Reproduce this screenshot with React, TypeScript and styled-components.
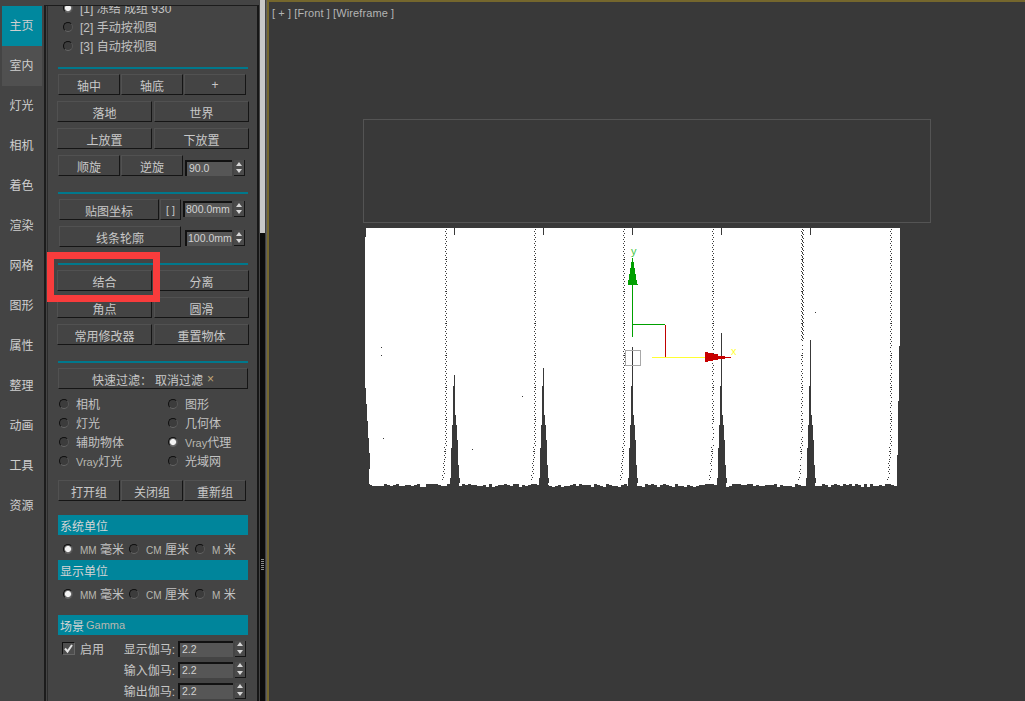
import type { ReactNode } from "react";
import styled, { createGlobalStyle } from "styled-components";

const GlobalStyle = createGlobalStyle`
  html, body {
    margin: 0;
    padding: 0;
    background: #444444;
  }
  * {
    box-sizing: border-box;
  }
`;

const Page = styled.div`
  width: 1025px;
  height: 701px;
  display: flex;
  overflow: hidden;
  background: #444444;
  color: #c6c6c6;
  font-family: "Liberation Sans", "Noto Sans CJK SC", sans-serif;
  font-size: 12px;
`;

const TabColumn = styled.nav`
  width: 44px;
  flex: none;
  padding: 6px 2px 0;
  display: flex;
  flex-direction: column;
`;

const Tab = styled.div<{ $state?: "active" | "hover" }>`
  width: 40px;
  height: 40px;
  flex: none;
  display: flex;
  align-items: center;
  justify-content: center;
  padding: 0 1px 3px 0;
  font-size: 12px;
  color: #cfcfcf;
  background: ${(p) =>
    p.$state === "active" ? "#00889e" : p.$state === "hover" ? "#505050" : "transparent"};
`;

const Panel = styled.section`
  position: relative;
  margin-top: 5px;
  width: 215px;
  height: 696px;
  flex: none;
  border-left: 2px solid #1c1c1c;
  border-top: 1px solid #1c1c1c;
  border-right: 2px solid #161616;
  overflow: hidden;
`;

const PanelBody = styled.div`
  height: 100%;
  margin-left: 1px;
  border-left: 1px solid #2c2c2c;
  padding-left: 9px;
  overflow: hidden;
`;

const Stack = styled.div`
  margin-top: -8px;
  width: 192px;
  display: flex;
  flex-direction: column;
`;

const Divider = styled.div<{ $top: number }>`
  height: 2px;
  flex: none;
  margin: ${(p) => p.$top}px 0 0 1px;
  width: 190px;
  background: #00788c;
`;

const ButtonRow = styled.div<{ $top: number; $left?: number; $cols: string; $gap?: number }>`
  display: grid;
  height: 21px;
  flex: none;
  margin: ${(p) => p.$top}px 0 0 ${(p) => p.$left ?? 0}px;
  grid-template-columns: ${(p) => p.$cols};
  column-gap: ${(p) => p.$gap ?? 1}px;
  align-items: start;
`;

const Btn = styled.div`
  height: 21px;
  display: flex;
  align-items: center;
  justify-content: center;
  padding-top: 1px;
  background: #444444;
  border: 1px solid;
  border-color: #515151 #151515 #151515 #515151;
  white-space: nowrap;
  color: #c8c8c8;
`;

const BracketMark = styled.span`
  font-size: 10.5px;
`;

const CancelLabel = styled.span`
  margin-left: 3px;
`;

const CancelMark = styled.span`
  margin-left: 4px;
  color: #c0a878;
`;

const Spinner = styled.div<{ $field: number; $top?: number; $ml?: number }>`
  display: flex;
  align-items: flex-start;
  gap: 2px;
  height: 16px;
  margin: ${(p) => p.$top ?? 0}px 0 0 ${(p) => p.$ml ?? 0}px;
  width: ${(p) => p.$field + 13}px;
`;

const SpinField = styled.div<{ $field: number; $pad?: number }>`
  width: ${(p) => p.$field}px;
  height: 16px;
  flex: none;
  background: #565656;
  border-top: 2px solid #111111;
  border-left: 2px solid #111111;
  padding-left: ${(p) => p.$pad ?? 2}px;
  font-size: 10.5px;
  line-height: 13px;
  color: #d2d2d2;
  white-space: nowrap;
  overflow: hidden;
`;

const SpinArrows = styled.div`
  width: 11px;
  height: 16px;
  flex: none;
  display: flex;
  flex-direction: column;
  border-right: 1px solid #151515;
  border-bottom: 1px solid #151515;
  background: #4a4a4a;
`;

const SpinArrow = styled.div<{ $down?: boolean }>`
  flex: 1;
  display: flex;
  align-items: center;
  justify-content: center;
  &::before {
    content: "";
    border-left: 3.5px solid transparent;
    border-right: 3.5px solid transparent;
    ${(p) => (p.$down ? "border-top: 4px solid #d6d6d6;" : "border-bottom: 4px solid #d6d6d6;")}
  }
`;

const RadioGrid = styled.div<{ $top: number; $left: number; $cols: string }>`
  display: grid;
  flex: none;
  margin: ${(p) => p.$top}px 0 0 ${(p) => p.$left}px;
  grid-template-columns: ${(p) => p.$cols};
  grid-auto-rows: 19px;
`;

const RadioItem = styled.label`
  display: flex;
  align-items: center;
  gap: 7px;
  white-space: nowrap;
  color: #c2c2c2;
`;

const RadioDot = styled.span<{ $on?: boolean }>`
  width: 10px;
  height: 10px;
  flex: none;
  border-radius: 50%;
  background: ${(p) =>
    p.$on
      ? "radial-gradient(circle, #f2f2f2 0 2.6px, #777777 3.4px, #333333 5px)"
      : "#3c3c3c"};
  border: 1.5px solid;
  border-color: #0e0e0e #555555 #666666 #0e0e0e;
`;

const Latin = styled.span<{ $size?: number }>`
  font-size: ${(p) => p.$size ?? 11}px;
  color: #b8b8b0;
`;

const SectionHeader = styled.div<{ $top: number }>`
  height: 20px;
  flex: none;
  width: 190px;
  margin: ${(p) => p.$top}px 0 0 1px;
  padding-left: 2px;
  display: flex;
  align-items: center;
  gap: 2px;
  background: #00859b;
  color: #d4d4d4;
`;

const GammaBlock = styled.div`
  display: grid;
  flex: none;
  grid-template-columns: 66px 118px;
  margin: 3px 0 0 5px;
`;

const EnableLabel = styled.label`
  display: flex;
  align-items: center;
  gap: 5px;
  height: 21px;
`;

const CheckBox = styled.span`
  width: 13px;
  height: 13px;
  flex: none;
  display: flex;
  align-items: center;
  justify-content: center;
  background: #4e4e4e;
  border: 1px solid;
  border-color: #111111 #666666 #666666 #111111;
`;

const GammaRows = styled.div`
  display: flex;
  flex-direction: column;
`;

const GammaRow = styled.div`
  height: 21px;
  display: flex;
  align-items: center;
  justify-content: flex-end;
  gap: 3px;
  white-space: nowrap;
`;

const RedFrame = styled.div`
  position: absolute;
  left: 1px;
  top: 246px;
  width: 113px;
  height: 50px;
  border: 7px solid #f83c3c;
  pointer-events: none;
`;

const ScrollTrack = styled.div`
  width: 5px;
  height: 701px;
  flex: none;
  margin-left: 1px;
  display: flex;
  flex-direction: column;
  background: #0c0c0c;
`;

const ScrollThumb = styled.div`
  height: 233px;
  flex: none;
  background: #c8c8c8;
`;

const ScrollGrip = styled.div`
  margin: 326px auto 0;
  width: 3px;
  height: 11px;
  background: repeating-linear-gradient(#8a8a8a 0 1px, transparent 1px 2px);
`;

const Gutter = styled.div`
  width: 2px;
  flex: none;
  background: linear-gradient(90deg, #404040 50%, #5e5e5e 50%);
`;

const Viewport = styled.main`
  position: relative;
  flex: 1;
  height: 701px;
  border-left: 2px solid #75672d;
  border-top: 2px solid #75672d;
  background: #393939;
`;

const ViewLabel = styled.div`
  position: absolute;
  left: 3px;
  top: 5px;
  font-size: 11px;
  letter-spacing: 0.1px;
  color: #b4b4b4;
  white-space: pre;
`;

const Scene = styled.svg`
  display: block;
`;

// little repeatable random so the curtain noise stays the same on each load
let seed = 17;
const rnd = () => {
  seed = (seed * 1103515245 + 12345) % 2147483648;
  return seed / 2147483648;
};

const folds = [454, 543, 632, 721, 810];
const foldStart = [375, 368, 347, 333, 340];
const dotted = [445, 534, 623, 712, 801, 890];

const curtainOutline = (() => {
  const pts: string[] = ["366,228", "900,228", "900,346", "899,346", "899,401", "898,401", "898,455", "897,455", "897,484"];
  for (let x = 897; x > 371; x -= 3) {
    const y = 484 + Math.floor(rnd() * 3.4);
    pts.push(`${x},${y}`, `${x - 3},${y}`);
  }
  pts.push("371,484", "369,484", "369,478", "370,460", "369,445", "368,430", "367,412", "366,395", "365,380", "365,237", "366,237");
  return pts.join(" ");
})();

const stairs: [number, number, number][] = [
  [386, -1, 1],
  [415, -1, 2],
  [425, -2, 3],
  [440, -2, 4],
  [448, -3, 4],
  [465, -3, 5],
  [478, -4, 6],
  [483, -4, 5],
];

const wedges = folds
  .map((cx, i) => {
    let d = `M${cx} 228h1v7h-1zM${cx} ${foldStart[i]}h1v${386 - foldStart[i]}h-1z`;
    stairs.forEach(([y, l, r], n) => {
      const next = n + 1 < stairs.length ? stairs[n + 1][0] : 488;
      d += `M${cx + l} ${y}H${cx + r}V${next}H${cx + l}z`;
    });
    return d;
  })
  .join("");

const dots = dotted
  .map((x0, i) => {
    let d = "";
    let row = 0;
    for (let y = 229; y < 480; y += 2) {
      row += 1;
      // the right three columns thin out below the middle of the curtain
      if (i >= 3 && y > 340 && rnd() < 0.2) continue;
      const drift = y < 440 ? 0 : Math.round(-((y - 440) / 40) * 3);
      const x = x0 + drift + (row % 2);
      // short dash every so often
      const w = row % 16 === 0 ? 2 : 1;
      d += `M${x} ${y}h${w}v1h-${w}z`;
      if (i === 4 && y < 340) d += `M${x + 1} ${y + 1}h1v1h-1z`;
    }
    return d;
  })
  .join("");

const specks: [number, number][] = [
  [381, 347],
  [381, 355],
  [383, 438],
  [472, 449],
  [522, 396],
  [815, 312],
];

const tabs = ["主页", "室内", "灯光", "相机", "着色", "渲染", "网格", "图形", "属性", "整理", "动画", "工具", "资源"];

function Spin({ value, field, top, ml, pad }: { value: string; field: number; top?: number; ml?: number; pad?: number }) {
  return (
    <Spinner $field={field} $top={top} $ml={ml}>
      <SpinField $field={field} $pad={pad}>{value}</SpinField>
      <SpinArrows>
        <SpinArrow />
        <SpinArrow $down />
      </SpinArrows>
    </Spinner>
  );
}

function Radio({ label, on }: { label: ReactNode; on?: boolean }) {
  return (
    <RadioItem>
      <RadioDot $on={on} />
      <span>{label}</span>
    </RadioItem>
  );
}

function UnitRow({ top }: { top: number }) {
  return (
    <RadioGrid $top={top} $left={6} $cols="66px 66px 60px">
      <Radio label={<><Latin $size={10}>MM</Latin> 毫米</>} on />
      <Radio label={<><Latin $size={10}>CM</Latin> 厘米</>} />
      <Radio label={<><Latin $size={10}>M</Latin> 米</>} />
    </RadioGrid>
  );
}

function ViewScene() {
  return (
    <Scene width="754" height="699" viewBox="269 2 754 699" shapeRendering="crispEdges">
      <rect x="363.5" y="119.5" width="567" height="103" fill="none" stroke="#545454" />
      <polygon points={curtainOutline} fill="#ffffff" />
      <path d={wedges} fill="#393939" />
      <path d={dots} fill="#393939" />
      {specks.map(([x, y]) => (
        <rect key={`${x}-${y}`} x={x} y={y} width="1" height="1" fill="#393939" />
      ))}
      {/* gizmo */}
      <rect x="625.5" y="350.5" width="15" height="15" fill="none" stroke="#a8a8a8" />
      <path d="M632 284h1v53h-1zM632 324h33v1h-33z" fill="#00a000" />
      <path d="M632 258h1v4h1v6h1v6h1v6h1v4h1v1h-10v-5h1v-6h1v-6h1v-6h1z" fill="#00a000" />
      <path d="M665 325h1v32h-1z" fill="#c00000" />
      <path d="M652 357h54v1h-54z" fill="#ffff33" />
      <path d="M705 352h3v1h5v1h5v2h7v1h6v1h-6v1h-7v1h-5v1h-5v1h-3z" fill="#c80000" />
      <text x="631" y="255" fontSize="11" fill="#3fc63f" fontFamily="Liberation Sans" shapeRendering="auto">y</text>
      <text x="731" y="355" fontSize="11" fill="#ffff33" fontFamily="Liberation Sans" shapeRendering="auto">x</text>
    </Scene>
  );
}

export default function App() {
  return (
    <Page>
      <GlobalStyle />
      <TabColumn>
        {tabs.map((name, index) => (
          <Tab key={name} $state={index === 0 ? "active" : index === 1 ? "hover" : undefined}>
            {name}
          </Tab>
        ))}
      </TabColumn>

      <Panel>
        <PanelBody>
          <Stack>
            <RadioGrid $top={0} $left={6} $cols="1fr">
              <Radio label="[1] 冻结 成组 930" on />
              <Radio label="[2] 手动按视图" />
              <Radio label="[3] 自动按视图" />
            </RadioGrid>

            <Divider $top={12} />
            <ButtonRow $top={5} $left={1} $cols="62px 62px 62px">
              <Btn>轴中</Btn>
              <Btn>轴底</Btn>
              <Btn>+</Btn>
            </ButtonRow>
            <ButtonRow $top={6} $cols="95px 95px" $gap={2}>
              <Btn>落地</Btn>
              <Btn>世界</Btn>
            </ButtonRow>
            <ButtonRow $top={6} $cols="95px 95px" $gap={2}>
              <Btn>上放置</Btn>
              <Btn>下放置</Btn>
            </ButtonRow>
            <ButtonRow $top={6} $left={1} $cols="62px 62px 60px" $gap={1}>
              <Btn>顺旋</Btn>
              <Btn>逆旋</Btn>
              <Spin value="90.0" field={47} top={5} ml={1} />
            </ButtonRow>

            <Divider $top={16} />
            <ButtonRow $top={5} $left={2} $cols="100px 21px 62px" $gap={1}>
              <Btn>贴图坐标</Btn>
              <Btn>
                <BracketMark>[ ]</BracketMark>
              </Btn>
              <Spin value="800.0mm" field={49} top={2} ml={1} pad={1} />
            </ButtonRow>
            <ButtonRow $top={6} $left={2} $cols="122px 60px" $gap={4}>
              <Btn>线条轮廓</Btn>
              <Spin value="100.0mm" field={47} top={4} pad={1} />
            </ButtonRow>

            <Divider $top={16} />
            <ButtonRow $top={5} $cols="95px 95px" $gap={2}>
              <Btn>结合</Btn>
              <Btn>分离</Btn>
            </ButtonRow>
            <ButtonRow $top={6} $cols="95px 95px" $gap={2}>
              <Btn>角点</Btn>
              <Btn>圆滑</Btn>
            </ButtonRow>
            <ButtonRow $top={6} $cols="95px 95px" $gap={2}>
              <Btn>常用修改器</Btn>
              <Btn>重置物体</Btn>
            </ButtonRow>

            <Divider $top={16} />
            <ButtonRow $top={5} $left={1} $cols="190px">
              <Btn>
                快速过滤：<CancelLabel>取消过滤</CancelLabel>
                <CancelMark>×</CancelMark>
              </Btn>
            </ButtonRow>
            <RadioGrid $top={5} $left={2} $cols="109px 1fr">
              <Radio label="相机" />
              <Radio label="图形" />
              <Radio label="灯光" />
              <Radio label="几何体" />
              <Radio label="辅助物体" />
              <Radio label={<><Latin>Vray</Latin>代理</>} on />
              <Radio label={<><Latin>Vray</Latin>灯光</>} />
              <Radio label="光域网" />
            </RadioGrid>
            <ButtonRow $top={10} $left={1} $cols="62px 62px 62px">
              <Btn>打开组</Btn>
              <Btn>关闭组</Btn>
              <Btn>重新组</Btn>
            </ButtonRow>

            <SectionHeader $top={14}>系统单位</SectionHeader>
            <UnitRow top={4} />
            <SectionHeader $top={2}>显示单位</SectionHeader>
            <UnitRow top={4} />
            <SectionHeader $top={12}>
              场景 <Latin>Gamma</Latin>
            </SectionHeader>

            <GammaBlock>
              <EnableLabel>
                <CheckBox>
                  <svg width="11" height="11" viewBox="0 0 11 11">
                    <path d="M2 5.5l2.5 3L9 2" fill="none" stroke="#e4e4e4" strokeWidth="2" />
                  </svg>
                </CheckBox>
                启用
              </EnableLabel>
              <GammaRows>
                {["显示伽马:", "输入伽马:", "输出伽马:"].map((label) => (
                  <GammaRow key={label}>
                    {label}
                    <Spin value="2.2" field={55} />
                  </GammaRow>
                ))}
              </GammaRows>
            </GammaBlock>
          </Stack>
        </PanelBody>
        <RedFrame />
      </Panel>

      <ScrollTrack>
        <ScrollThumb />
        <ScrollGrip />
      </ScrollTrack>
      <Gutter />

      <Viewport>
        <ViewScene />
        <ViewLabel>{"[ + ] [Front ] [Wireframe ]"}</ViewLabel>
      </Viewport>
    </Page>
  );
}
